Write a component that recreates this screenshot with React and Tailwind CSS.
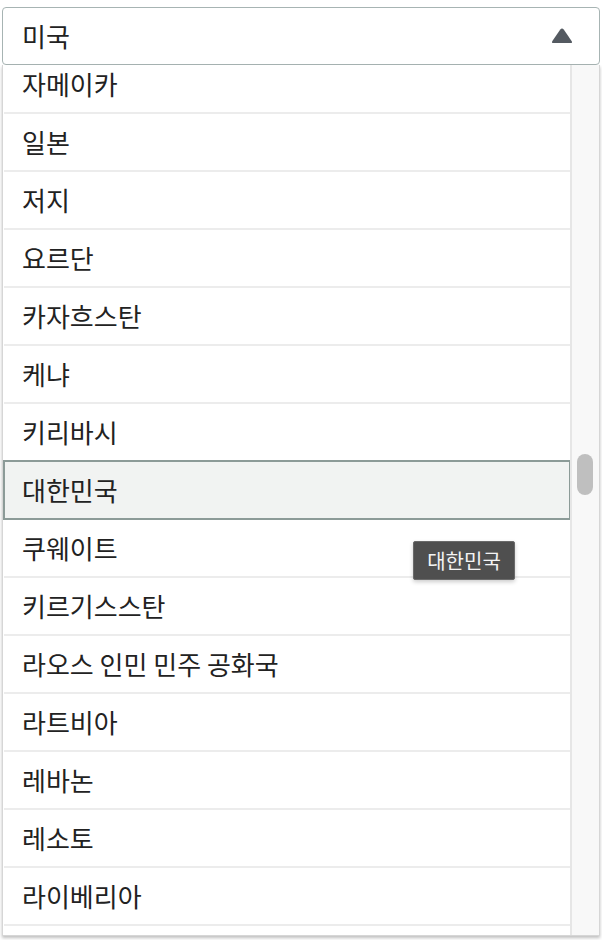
import React from "react";

const items = [
  "자메이카",
  "일본",
  "저지",
  "요르단",
  "카자흐스탄",
  "케냐",
  "키리바시",
  "대한민국",
  "쿠웨이트",
  "키르기스스탄",
  "라오스 인민 민주 공화국",
  "라트비아",
  "레바논",
  "레소토",
  "라이베리아",
];

export default function App() {
  return (
    <div
      className="relative w-[602px] h-[940px] bg-white overflow-hidden text-[#222]"
      style={{ fontFamily: '"Noto Sans CJK KR", "Noto Sans", sans-serif' }}
    >
      <div className="pt-[7px] pl-[2px] w-[600px]">
        <div className="flex items-center justify-between h-[58px] border border-[#a7b4b3] rounded-[4px] pl-[19px] pr-[26px] bg-white">
          <span className="text-[26px] leading-none">미국</span>
          <svg width="22" height="16" viewBox="0 0 22 16">
            <path
              d="M9.3 1.6 Q11 -0.6 12.7 1.6 L20.6 13 Q21.8 15 19.6 15 L2.4 15 Q0.2 15 1.4 13 Z"
              fill="#545a61"
            />
          </svg>
        </div>
        <div className="flex h-[871px] border-l border-r border-b border-[#d6d6d6] shadow-[0_2px_3px_rgba(0,0,0,0.25)] overflow-hidden">
          <div className="flex-1 overflow-hidden">
            <div className="-mt-[9px] pl-[1px]">
              {items.map((name) =>
                name === "대한민국" ? (
                  <div
                    key={name}
                    className="-mt-[2px] h-[60px] flex items-center pl-[17px] border-2 border-[#8c9b98] bg-[#f1f3f2] -ml-[1px] -mr-[1px]"
                  >
                    <span className="text-[26px] leading-none">{name}</span>
                  </div>
                ) : (
                  <div
                    key={name}
                    className="h-[58px] flex items-center pl-[18px] border-b-2 border-[#ececec]"
                  >
                    <span className="text-[26px] leading-none">{name}</span>
                  </div>
                )
              )}
            </div>
          </div>
          <div className="w-[29px] border-l-2 border-[#e6e6e6] bg-[#f8f8f8] relative">
            <div className="absolute left-[5px] top-[389px] w-[16px] h-[41px] rounded-full bg-[#bfbfbf]" />
          </div>
        </div>
      </div>
      <div className="absolute left-[413px] top-[541px] w-[102px] h-[39px] flex items-center justify-center bg-[#4f4f4f] border border-[#6a6a6a] rounded-[2px] shadow-[0_2px_4px_rgba(0,0,0,0.2)]">
        <span className="text-[20px] leading-none text-[#f4f4f4]">대한민국</span>
      </div>
    </div>
  );
}
